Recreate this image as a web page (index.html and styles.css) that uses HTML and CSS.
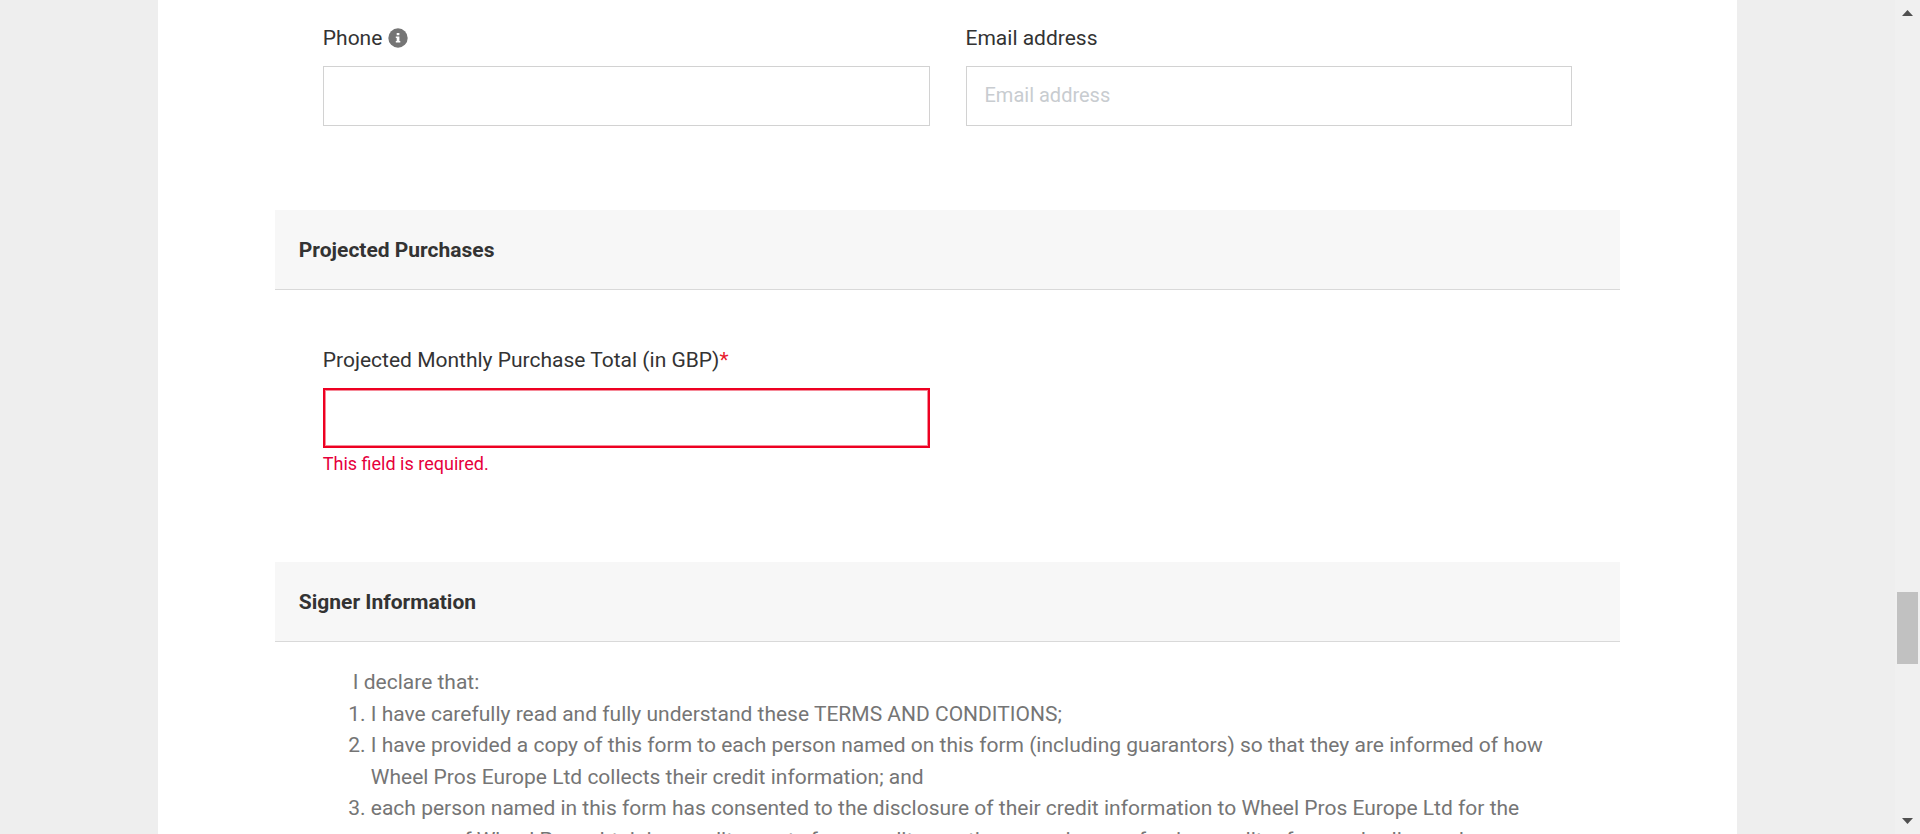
FILE: index.html
```html
<!DOCTYPE html>
<html lang="en">
<head>
<meta charset="utf-8">
<title>Trade Account Application</title>
<link rel="stylesheet" href="styles.css">
</head>
<body>
<div class="window">
  <div class="viewport">
    <main class="page">
      <form class="form" novalidate>
        <section class="section">
          <div class="fields contact">
            <div class="field">
              <div class="label-row">
                <label class="label" for="phone">Phone</label>
                <svg class="info" viewBox="0 0 20 20" aria-hidden="true">
                  <circle cx="10" cy="10" r="9.7" fill="#757575"/>
                  <path fill="#fff" d="M8.7 5h2.7v2.3H8.7zM7.8 8.400h3.600v4.500h.9v1.600H7.800v-1.600h.9V10h-.9z"/>
                </svg>
              </div>
              <input class="input" id="phone" type="tel">
            </div>
            <div class="field">
              <div class="label-row">
                <label class="label" for="email">Email address</label>
              </div>
              <input class="input" id="email" type="email" placeholder="Email address">
            </div>
          </div>
        </section>
        <section class="section">
          <h2 class="heading">Projected Purchases</h2>
          <div class="fields purchases">
            <div class="field">
              <div class="label-row">
                <label class="label" for="total">Projected Monthly Purchase Total (in GBP)<span class="required">*</span></label>
              </div>
              <input class="input invalid" id="total" type="text" aria-describedby="total-error">
              <p class="error" id="total-error">This field is required.</p>
            </div>
          </div>
        </section>
        <section class="section">
          <h2 class="heading">Signer Information</h2>
          <div class="terms">
            <p class="declare">I declare that:</p>
            <ol class="list">
              <li>I have carefully read and fully understand these TERMS AND CONDITIONS;</li>
              <li>I have provided a copy of this form to each person named on this form (including guarantors) so that they are informed of how Wheel Pros Europe Ltd collects their credit information; and</li>
              <li>each person named in this form has consented to the disclosure of their credit information to Wheel Pros Europe Ltd for the purpose of Wheel Pros obtaining credit reports from credit reporting agencies or a foreign credit reference bodies and</li>
            </ol>
          </div>
        </section>
      </form>
    </main>
  </div>
  <div class="scrollbar" aria-hidden="true">
    <svg class="arrow" viewBox="0 0 11 6"><path fill="#505050" d="M0 6 5.500 0 11 6z"/></svg>
    <div class="track"><div class="thumb"></div></div>
    <svg class="arrow" viewBox="0 0 11 6"><path fill="#505050" d="M0 0h11L5.500 6z"/></svg>
  </div>
</div>
</body>
</html>
```
FILE: styles.css
```css
* {
  box-sizing: border-box;
}

body {
  margin: 0;
  background: #eee;
  color: #333;
  font-family: Roboto, "Liberation Sans", sans-serif;
  font-size: 21px;
  line-height: 1.5;
}

.window {
  display: flex;
  height: 100vh;
  overflow: hidden;
}

.viewport {
  flex: 1;
  min-width: 0;
  overflow: hidden;
}

.page {
  width: 83.33%;
  min-height: 100%;
  margin: 0 auto;
  background: #fff;
}

.form {
  width: 85.2%;
  margin: 0 auto;
}

.fields {
  display: grid;
  grid-template-columns: 1fr 1fr;
  column-gap: 36px;
  padding: 0 48px;
}

.contact {
  padding-top: 23px;
  padding-bottom: 84px;
}

.purchases {
  padding-top: 55px;
  padding-bottom: 82px;
}

.label-row {
  display: flex;
  align-items: center;
  gap: 6px;
  height: 32px;
  margin-bottom: 11px;
}

.info {
  width: 20px;
  height: 20px;
  margin-bottom: 2px;
}

.required {
  color: #e81c2e;
}

.input {
  display: block;
  width: 100%;
  height: 60px;
  padding: 0 18px 2px;
  border: 1px solid #d2d2d2;
  border-radius: 0;
  background: #fff;
  color: #333;
  font: inherit;
  font-size: 20px;
  outline: none;
}

.input::placeholder {
  color: #c8ccd0;
  opacity: 1;
}

.input.invalid {
  border: 2px solid #ee0022;
  box-shadow: inset 0 0 0 1px #f58a98;
}

.error {
  margin: 0;
  color: #e6003c;
  font-size: 18px;
  line-height: 32px;
}

.heading {
  margin: 0;
  padding: 25px 24px 23px;
  border-bottom: 1px solid #d9d9d9;
  background: #f7f7f7;
  font-size: 21px;
  font-weight: 700;
  line-height: 31px;
}

.terms {
  padding: 25px 72px 0;
  color: #757575;
}

.declare {
  margin: 0;
  padding-left: 6px;
}

.list {
  margin: 0;
  padding-left: 24px;
}

.scrollbar {
  display: flex;
  flex-direction: column;
  align-items: center;
  width: 25px;
  padding: 10px 2px;
  background: #f0f0f0;
}

.arrow {
  width: 11px;
  height: 6px;
}

.track {
  flex: 1;
  width: 100%;
  padding-top: 576px;
}

.thumb {
  height: 72px;
  background: #c1c1c1;
}
```
